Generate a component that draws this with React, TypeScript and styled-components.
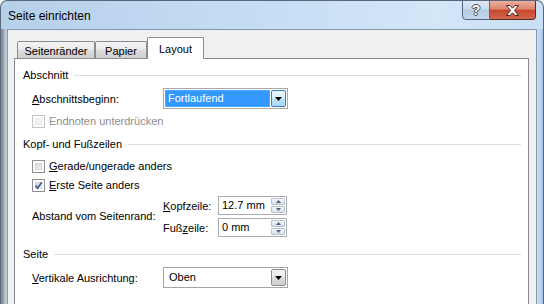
import React from 'react';
import styled, { createGlobalStyle } from 'styled-components';

const FONT = '"Liberation Sans", Arial, sans-serif';

const GlobalStyle = createGlobalStyle`
  html, body {
    margin: 0;
    padding: 0;
    background: #ffffff;
  }
  body {
    font-family: ${FONT};
    font-size: 11px;
    color: #000;
  }
`;

const Window = styled.div`
  box-sizing: border-box;
  width: 544px;
  height: 304px;
  overflow: hidden;
  display: flex;
  flex-direction: column;
  border: 1px solid #56677a;
  border-bottom: none;
  border-radius: 7px 7px 0 0;
  background: linear-gradient(90deg, #b7d0ea 0%, #c4dcf4 45%, #d4e6f8 80%, #cadff4 100%);
`;

const TitleBar = styled.div`
  height: 28px;
  display: flex;
  justify-content: space-between;
  align-items: flex-start;
`;

const Title = styled.div`
  padding: 8px 0 0 7px;
  font-size: 12px;
  line-height: 15px;
`;

const CaptionButtons = styled.div`
  display: flex;
  margin: -1px 7px 0 0;
`;

const HelpButton = styled.div`
  box-sizing: border-box;
  width: 28px;
  height: 20px;
  border: 1px solid #52637a;
  border-radius: 0 0 0 4px;
  background: linear-gradient(#dde8f5 0%, #cbdaec 45%, #b5c9e0 50%, #c4d8ee 100%);
  display: flex;
  align-items: center;
  justify-content: center;
  color: #fff;
  font-weight: bold;
  font-size: 14px;
  text-shadow: 1px 0 0 #3f4b5c, -1px 0 0 #3f4b5c, 0 1px 0 #3f4b5c, 0 -1px 0 #3f4b5c;
`;

const CloseButton = styled.div`
  box-sizing: border-box;
  width: 46px;
  height: 20px;
  border: 1px solid #5a2b22;
  border-left: none;
  border-radius: 0 0 4px 0;
  background: linear-gradient(#eab0a2 0%, #dc846c 45%, #c7472d 52%, #d2674c 100%);
  display: flex;
  align-items: center;
  justify-content: center;
`;

const Body = styled.div`
  flex: 1;
  display: flex;
  min-height: 0;
`;

const LeftFrame = styled.div`
  width: 6px;
  background: linear-gradient(90deg, #8e98a2 0%, #7f8a95 25%, #b0bac4 55%, #c4ced8 100%);
`;

const RightFrame = styled.div`
  width: 6px;
  background: linear-gradient(90deg, #c8def4 0%, #bad7f6 50%, #a6c2e0 100%);
`;

const Client = styled.div`
  flex: 1;
  display: flex;
  flex-direction: column;
  background: #f0f0f0;
  border: 1px solid #8397ae;
  border-bottom: none;
  padding: 7px 7px 0 6px;
  min-width: 0;
`;

const TabStrip = styled.div`
  display: flex;
  align-items: flex-end;
  padding-left: 3px;
  position: relative;
  z-index: 1;
`;

const Tab = styled.div<{ $width: number; $active?: boolean }>`
  box-sizing: border-box;
  width: ${(p) => p.$width}px;
  height: ${(p) => (p.$active ? 22 : 17)}px;
  margin-bottom: ${(p) => (p.$active ? -1 : 0)}px;
  padding-top: ${(p) => (p.$active ? 4 : 2)}px;
  line-height: 14px;
  text-align: center;
  border: 1px solid #898c95;
  border-bottom: none;
  border-radius: 2px 2px 0 0;
  background: ${(p) =>
    p.$active ? '#ffffff' : 'linear-gradient(#f3f3f3 0%, #ebebeb 45%, #dddddd 50%, #cfcfcf 100%)'};
`;

const Panel = styled.div`
  flex: 1;
  background: #ffffff;
  border: 1px solid #898c95;
  border-bottom: none;
  padding: 8px 7px 0 8px;
`;

const GroupHeader = styled.div<{ $top?: number }>`
  display: flex;
  align-items: center;
  gap: 6px;
  height: 16px;
  margin-top: ${(p) => p.$top ?? 0}px;

  &::after {
    content: '';
    flex: 1;
    height: 1px;
    background: #d5dfe5;
  }
`;

const Row = styled.div<{ $top: number; $height: number }>`
  display: flex;
  align-items: center;
  height: ${(p) => p.$height}px;
  margin-top: ${(p) => p.$top}px;
  padding-left: 9px;
`;

const FieldLabel = styled.div<{ $width: number; $disabled?: boolean }>`
  width: ${(p) => p.$width}px;
  flex: none;
  color: ${(p) => (p.$disabled ? '#8d8d8d' : '#000')};
`;

const Key = styled.span`
  text-decoration: underline;
`;

const CheckLabel = styled.span<{ $disabled?: boolean }>`
  margin-left: 4px;
  color: ${(p) => (p.$disabled ? '#8d8d8d' : '#000')};
`;

const CheckBox = styled.div<{ $disabled?: boolean }>`
  box-sizing: border-box;
  width: 13px;
  height: 13px;
  border: 1px solid ${(p) => (p.$disabled ? '#c5c5c5' : '#8e8f8f')};
  padding: 2px;
  background: #fdfdfd;
  position: relative;

  &::before {
    content: '';
    display: block;
    width: 100%;
    height: 100%;
    background: ${(p) =>
      p.$disabled ? '#f2f2f2' : 'linear-gradient(135deg, #cbcfd5 0%, #e3e5e8 50%, #f6f6f6 100%)'};
    box-shadow: inset 0 0 0 1px ${(p) => (p.$disabled ? '#ececec' : '#d4d6da')};
  }

  svg {
    position: absolute;
    left: 1px;
    top: 1px;
  }
`;

const Combo = styled.div<{ $focused?: boolean }>`
  box-sizing: border-box;
  width: 125px;
  height: 21px;
  display: flex;
  border: 1px solid ${(p) => (p.$focused ? '#a9a9a9' : '#a5a5a5')};
  background: #ffffff;
  padding: 1px;
`;

const ComboValue = styled.div<{ $selected?: boolean }>`
  flex: 1;
  box-sizing: border-box;
  margin-right: 1px;
  padding-left: ${(p) => (p.$selected ? 2 : 3)}px;
  line-height: 15px;
  color: ${(p) => (p.$selected ? '#ffffff' : '#000')};
  background: ${(p) => (p.$selected ? '#3399ff' : 'transparent')};
  border: 1px ${(p) => (p.$selected ? 'dotted #e39b55' : 'solid transparent')};
`;

const ComboButton = styled.div<{ $focused?: boolean }>`
  box-sizing: border-box;
  width: 15px;
  display: flex;
  align-items: center;
  justify-content: center;
  border: 1px solid ${(p) => (p.$focused ? '#3c7fb1' : '#8c8c8c')};
  border-radius: 2px;
  background: ${(p) =>
    p.$focused
      ? 'linear-gradient(#eaf6fd 0%, #d9f0fc 45%, #bee6fd 50%, #a7d9f5 100%)'
      : 'linear-gradient(#f2f2f2 0%, #ebebeb 45%, #dddddd 50%, #cfcfcf 100%)'};
`;

const SpinGrid = styled.div`
  display: grid;
  grid-template-columns: 131px 55px 69px;
  grid-template-rows: 19px 19px;
  row-gap: 3px;
  align-items: center;
  margin-top: 3px;
  padding-left: 9px;
`;

const SpanLabel = styled.div`
  grid-row: 1 / span 2;
  align-self: center;
  margin-top: -2px;
`;

const SpinBox = styled.div`
  box-sizing: border-box;
  height: 19px;
  display: flex;
  border: 1px solid #abadb3;
  background: #fff;
  padding: 1px;
`;

const SpinText = styled.div`
  flex: 1;
  padding-left: 2px;
  line-height: 15px;
`;

const SpinButtons = styled.div`
  width: 14px;
  display: flex;
  flex-direction: column;
  gap: 1px;
`;

const SpinArrow = styled.div`
  flex: 1;
  display: flex;
  align-items: center;
  justify-content: center;
  border: 1px solid #b8c3cf;
  border-radius: 1px;
  background: linear-gradient(#f6f8fa 0%, #e6ebf1 50%, #d8dfe8 100%);
`;

const Arrow = ({ up = false, color = '#000', w = 7, h = 4 }: { up?: boolean; color?: string; w?: number; h?: number }) => (
  <svg width={w} height={h} viewBox={`0 0 ${w} ${h}`}>
    <polygon points={up ? `0,${h} ${w},${h} ${w / 2},0` : `0,0 ${w},0 ${w / 2},${h}`} fill={color} />
  </svg>
);

const Check = ({ checked, disabled }: { checked?: boolean; disabled?: boolean }) => (
  <CheckBox $disabled={disabled}>
    {checked && (
      <svg width="9" height="9" viewBox="0 0 9 9">
        <path d="M1.5 4.5 L3.6 7 L7.8 1.2" fill="none" stroke="#4a5f97" strokeWidth="1.8" />
      </svg>
    )}
  </CheckBox>
);

const Spinner = ({ value }: { value: string }) => (
  <SpinBox>
    <SpinText>{value}</SpinText>
    <SpinButtons>
      <SpinArrow>
        <Arrow up color="#4d6185" w={5} h={3} />
      </SpinArrow>
      <SpinArrow>
        <Arrow color="#4d6185" w={5} h={3} />
      </SpinArrow>
    </SpinButtons>
  </SpinBox>
);

export default function App() {
  return (
    <>
      <GlobalStyle />
      <Window>
        <TitleBar>
          <Title>Seite einrichten</Title>
          <CaptionButtons>
            <HelpButton>?</HelpButton>
            <CloseButton>
              <svg width="15" height="11" viewBox="0 0 15 11">
                <path
                  d="M1.5 0.5 H5 L7.5 3.2 L10 0.5 H13.5 L9.5 5.5 L13.5 10.5 H10 L7.5 7.8 L5 10.5 H1.5 L5.5 5.5 Z"
                  fill="#ffffff"
                  stroke="#54231a"
                  strokeWidth="1"
                />
              </svg>
            </CloseButton>
          </CaptionButtons>
        </TitleBar>
        <Body>
          <LeftFrame />
          <Client>
            <TabStrip>
              <Tab $width={78}>Seitenränder</Tab>
              <Tab $width={52}>Papier</Tab>
              <Tab $width={57} $active>
                Layout
              </Tab>
            </TabStrip>
            <Panel>
              <GroupHeader>Abschnitt</GroupHeader>
              <Row $top={5} $height={21}>
                <FieldLabel $width={131}>
                  <Key>A</Key>bschnittsbeginn:
                </FieldLabel>
                <Combo $focused>
                  <ComboValue $selected>Fortlaufend</ComboValue>
                  <ComboButton $focused>
                    <Arrow />
                  </ComboButton>
                </Combo>
              </Row>
              <Row $top={4} $height={16}>
                <Check disabled />
                <CheckLabel $disabled>Endnoten unterdrücken</CheckLabel>
              </Row>

              <GroupHeader $top={7}>Kopf- und Fußzeilen</GroupHeader>
              <Row $top={6} $height={16}>
                <Check />
                <CheckLabel>
                  <Key>G</Key>erade/ungerade anders
                </CheckLabel>
              </Row>
              <Row $top={3} $height={16}>
                <Check checked />
                <CheckLabel>
                  <Key>E</Key>rste Seite anders
                </CheckLabel>
              </Row>
              <SpinGrid>
                <SpanLabel>Abstand vom Seitenrand:</SpanLabel>
                <div>
                  <Key>K</Key>opfzeile:
                </div>
                <Spinner value="12.7 mm" />
                <div>
                  Fuß<Key>z</Key>eile:
                </div>
                <Spinner value="0 mm" />
              </SpinGrid>

              <GroupHeader $top={9}>Seite</GroupHeader>
              <Row $top={5} $height={21}>
                <FieldLabel $width={131}>
                  <Key>V</Key>ertikale Ausrichtung:
                </FieldLabel>
                <Combo>
                  <ComboValue>Oben</ComboValue>
                  <ComboButton>
                    <Arrow />
                  </ComboButton>
                </Combo>
              </Row>
            </Panel>
          </Client>
          <RightFrame />
        </Body>
      </Window>
    </>
  );
}
